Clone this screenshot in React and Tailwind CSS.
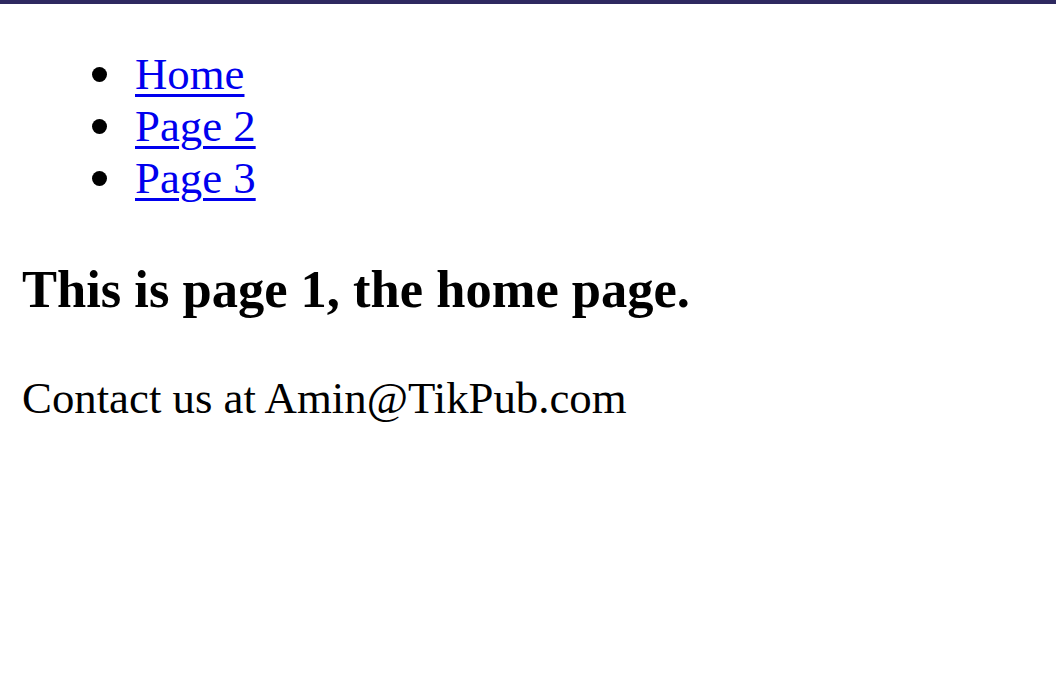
export default function App() {
  const links = ['Home', 'Page 2', 'Page 3'];
  return (
    <div className="min-h-screen bg-white border-t-[4px] border-[#2e2960] px-[22px] pt-[44px] font-['Liberation_Serif',serif] text-[44.8px] leading-[normal] text-black">
      <ul className="pl-[70px]">
        {links.map((l) => (
          <li key={l} className="flex items-center gap-[28px]">
            <span className="h-[15px] w-[15px] shrink-0 rounded-full bg-black" />
            <a href="#" className="text-[#0000ee] underline decoration-[3px] underline-offset-[5px]">
              {l}
            </a>
          </li>
        ))}
      </ul>
      <h3 className="mt-[55px] text-[52.5px] font-bold leading-[normal]">
        This is page 1, the home page.
      </h3>
      <p className="mt-[53px]">Contact us at Amin@TikPub.com</p>
    </div>
  );
}
